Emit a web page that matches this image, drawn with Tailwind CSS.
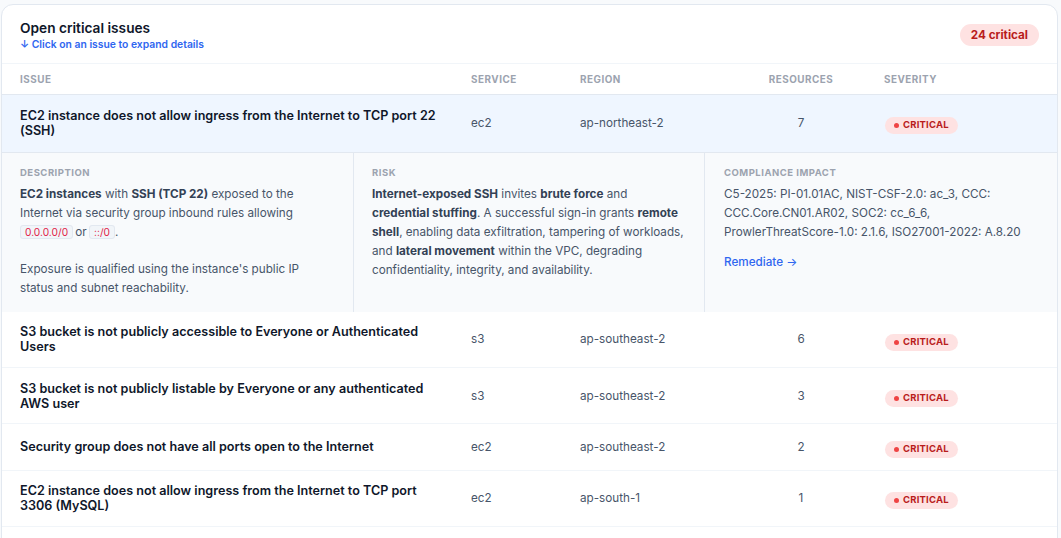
<!DOCTYPE html>
<html><head><meta charset="utf-8">
<script src="https://cdn.jsdelivr.net/npm/@tailwindcss/browser@4"></script>
</head>
<body class="m-0 bg-[#f8fafc] font-['Inter',sans-serif] h-[538px] overflow-hidden">
<div class="ml-px mr-[3px] mt-1 bg-white border border-[#e2e8f0] rounded-xl overflow-hidden h-[600px]">
  <div class="flex justify-between h-[59px] pl-[18px] pr-[18px] pt-[14px] border-b border-[#f1f5f9]">
    <div>
      <div class="text-[13.7px] leading-[18px] font-semibold text-[#0f172a]">Open critical issues</div>
      <div class="text-[10.35px] leading-[14px] font-semibold text-[#2f66f0]">↓ Click on an issue to expand details</div>
    </div>
    <div class="mt-[5px] h-[22px] px-[11px] rounded-full bg-[#fee2e2] text-[#b91c1c] text-[11.7px] font-bold leading-[22px]">24 critical</div>
  </div>
  <div class="grid grid-cols-[449px_109px_178px_126px_1fr] h-[31px] items-center border-b border-[#e2e8f0] text-[9.9px] font-bold tracking-[0.5px] text-[#9ca3af]">
    <div class="pl-[18px]">ISSUE</div><div class="pl-5">SERVICE</div><div class="pl-5">REGION</div><div class="text-center pl-5 pr-5">RESOURCES</div><div class="pl-5">SEVERITY</div>
  </div>
  <div class="grid grid-cols-[449px_109px_178px_126px_1fr] h-[58px] items-center bg-[#eff6ff] border-b border-[#e2e8f0] text-[11.7px] text-[#475569]">
    <div class="pl-[18px] pr-2 text-[12.6px] leading-[15px] font-semibold text-[#0f172a] mb-[2px]">EC2 instance does not allow ingress from the Internet to TCP port 22 (SSH)</div><div class="pl-5">ec2</div><div class="pl-5">ap-northeast-2</div><div class="text-center pl-5 pr-5">7</div>
    <div class="pl-5"><span class="inline-flex items-center gap-1 h-[17px] px-[9px] ml-px mt-[3px] rounded-full bg-[#fee2e2] text-[#b91c1c] text-[9.5px] font-bold tracking-[0.2px]"><span class="w-[5px] h-[5px] rounded-full bg-[#ef4444]"></span>CRITICAL</span></div>
  </div>
  <div class="grid grid-cols-[352px_351px_1fr] h-[159px] bg-[#f8fafc]">
    <div class="pl-[18px] pr-5 pt-[14px] border-r border-[#e2e8f0]">
      <div class="text-[9.5px] leading-3 font-bold tracking-[0.5px] text-[#9ca3af] mb-[6px]">DESCRIPTION</div>
      <p class="text-[11.7px] leading-[19px] text-[#475569]"><b class="font-bold text-[#334155]">EC2 instances</b> with <b class="font-bold text-[#334155]">SSH (TCP 22)</b> exposed to the Internet via security group inbound rules allowing <code class="font-['Inter',sans-serif] text-[10.2px] text-[#e11d48] bg-[#f1f5f9] border border-[#e2e8f0] rounded-[3px] px-1 -mr-px">0.0.0.0/0</code> or <code class="font-['Inter',sans-serif] text-[10.2px] text-[#e11d48] bg-[#f1f5f9] border border-[#e2e8f0] rounded-[3px] px-1 -ml-px">::/0</code>.</p>
      <p class="text-[11.7px] leading-[19px] text-[#475569] mt-[18px]">Exposure is qualified using the instance's public IP status and subnet reachability.</p>
    </div>
    <div class="pl-[18px] pr-5 pt-[14px] border-r border-[#e2e8f0]">
      <div class="text-[9.5px] leading-3 font-bold tracking-[0.5px] text-[#9ca3af] mb-[6px]">RISK</div>
      <p class="text-[11.7px] leading-[19px] text-[#475569]"><b class="font-bold text-[#334155]">Internet-exposed SSH</b> invites <b class="font-bold text-[#334155]">brute force</b> and <b class="font-bold text-[#334155]">credential stuffing</b>. A successful sign-in grants <b class="font-bold text-[#334155]">remote shell</b>, enabling data exfiltration, tampering of workloads, and <b class="font-bold text-[#334155]">lateral movement</b> within the VPC, degrading confidentiality, integrity, and availability.</p>
    </div>
    <div class="pl-[19px] pr-4 pt-[14px]">
      <div class="text-[9.5px] leading-3 font-bold tracking-[0.5px] text-[#9ca3af] mb-[6px]">COMPLIANCE IMPACT</div>
      <p class="text-[11.7px] leading-[19px] text-[#475569]">C5-2025: PI-01.01AC, NIST-CSF-2.0: ac_3, CCC: CCC.Core.CN01.AR02, SOC2: cc_6_6, ProwlerThreatScore-1.0: 2.1.6, ISO27001-2022: A.8.20</p>
      <div class="mt-[12px] text-[11.7px] leading-4 font-medium text-[#2f66f0]">Remediate <span class="font-normal">→</span></div>
    </div>
  </div>
  <div class="grid grid-cols-[449px_109px_178px_126px_1fr] h-[56px] items-center border-b border-[#f1f5f9] text-[11.7px] text-[#475569]">
    <div class="pl-[18px] pr-2 text-[12.6px] leading-[15px] font-semibold text-[#0f172a] mb-[2px]">S3 bucket is not publicly accessible to Everyone or Authenticated Users</div><div class="pl-5">s3</div><div class="pl-5">ap-southeast-2</div><div class="text-center pl-5 pr-5">6</div>
    <div class="pl-5"><span class="inline-flex items-center gap-1 h-[17px] px-[9px] ml-px mt-[5px] rounded-full bg-[#fee2e2] text-[#b91c1c] text-[9.5px] font-bold tracking-[0.2px]"><span class="w-[5px] h-[5px] rounded-full bg-[#ef4444]"></span>CRITICAL</span></div>
  </div>
  <div class="grid grid-cols-[449px_109px_178px_126px_1fr] h-[56px] pt-[2px] items-center border-b border-[#f1f5f9] text-[11.7px] text-[#475569]">
    <div class="pl-[18px] pr-2 text-[12.6px] leading-[15px] font-semibold text-[#0f172a] mb-[2px]">S3 bucket is not publicly listable by Everyone or any authenticated AWS user</div><div class="pl-5">s3</div><div class="pl-5">ap-southeast-2</div><div class="text-center pl-5 pr-5">3</div>
    <div class="pl-5"><span class="inline-flex items-center gap-1 h-[17px] px-[9px] ml-px mt-[3px] rounded-full bg-[#fee2e2] text-[#b91c1c] text-[9.5px] font-bold tracking-[0.2px]"><span class="w-[5px] h-[5px] rounded-full bg-[#ef4444]"></span>CRITICAL</span></div>
  </div>
  <div class="grid grid-cols-[449px_109px_178px_126px_1fr] h-[47px] pt-[2px] items-center border-b border-[#f1f5f9] text-[11.7px] text-[#475569]">
    <div class="pl-[18px] pr-2 text-[12.6px] leading-[15px] font-semibold text-[#0f172a] mb-[4px]">Security group does not have all ports open to the Internet</div><div class="pl-5">ec2</div><div class="pl-5">ap-southeast-2</div><div class="text-center pl-5 pr-5">2</div>
    <div class="pl-5"><span class="inline-flex items-center gap-1 h-[17px] px-[9px] ml-px mt-[3px] rounded-full bg-[#fee2e2] text-[#b91c1c] text-[9.5px] font-bold tracking-[0.2px]"><span class="w-[5px] h-[5px] rounded-full bg-[#ef4444]"></span>CRITICAL</span></div>
  </div>
  <div class="grid grid-cols-[449px_109px_178px_126px_1fr] h-[56px] items-center border-b border-[#f1f5f9] text-[11.7px] text-[#475569]">
    <div class="pl-[18px] pr-2 text-[12.6px] leading-[15px] font-semibold text-[#0f172a] mb-[2px]">EC2 instance does not allow ingress from the Internet to TCP port 3306 (MySQL)</div><div class="pl-5">ec2</div><div class="pl-5">ap-south-1</div><div class="text-center pl-5 pr-5">1</div>
    <div class="pl-5"><span class="inline-flex items-center gap-1 h-[17px] px-[9px] ml-px mt-[3px] rounded-full bg-[#fee2e2] text-[#b91c1c] text-[9.5px] font-bold tracking-[0.2px]"><span class="w-[5px] h-[5px] rounded-full bg-[#ef4444]"></span>CRITICAL</span></div>
  </div>
</div>
</body></html>
